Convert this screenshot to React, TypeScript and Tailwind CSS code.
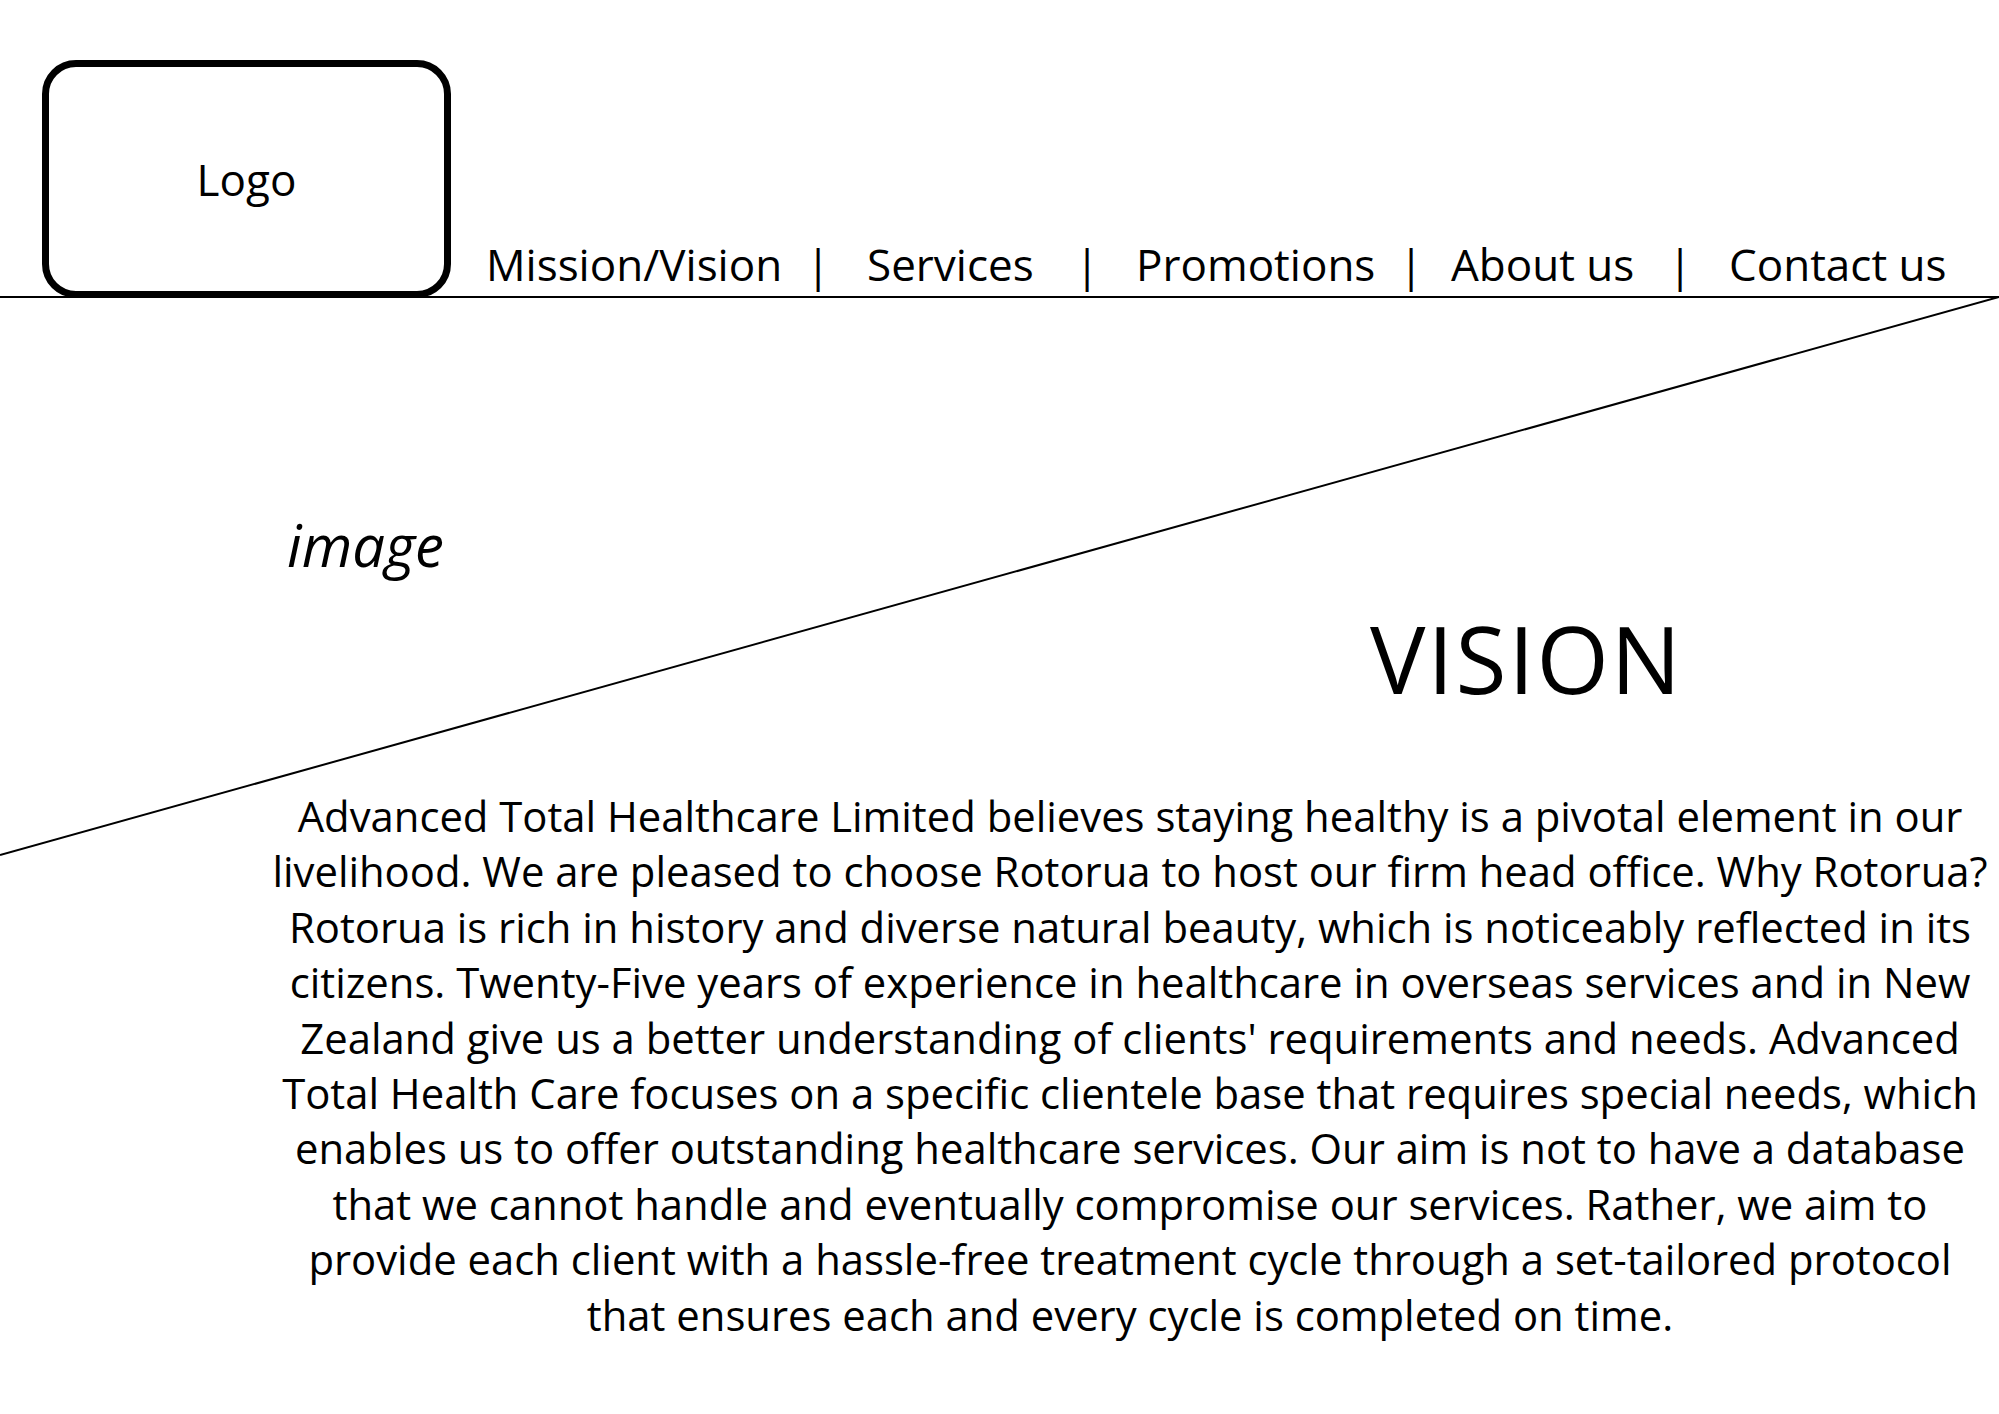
const navItems = [
  { label: "Mission/Vision", box: "w-[320px]" },
  { label: "Services", box: "w-[245px] pl-[37px]" },
  { label: "Promotions", box: "w-[300px] pl-[37px]" },
  { label: "About us", box: "w-[245px] pl-[28px]" },
  { label: "Contact us", box: "pl-[37px]" },
];

export default function App() {
  return (
    <div className="relative w-[1999px] h-[1414px] overflow-hidden bg-white text-black font-['Open_Sans',sans-serif]">
      {/* diagonal stroke of the wireframe */}
      <svg className="absolute inset-0 pointer-events-none" width="1999" height="1414" viewBox="0 0 1999 1414">
        <line x1="1999" y1="297" x2="0" y2="855" stroke="#000" strokeWidth="2" />
      </svg>

      <header className="flex items-end h-[298px] pl-[42px] border-b-2 border-black">
        <div className="flex items-center justify-center w-[409px] h-[238px] -mb-[2px] border-[7px] border-black rounded-[34px]">
          <span className="text-[44px] leading-none">Logo</span>
        </div>
        <nav className="flex items-baseline ml-[35px] mb-[10px] text-[44px] leading-none">
          {navItems.map((item, i) => (
            <div key={item.label} className="flex items-baseline">
              {i > 0 && <span className="w-[24px] text-center">|</span>}
              <span className={item.box}>{item.label}</span>
            </div>
          ))}
        </nav>
      </header>

      <main>
        <p className="ml-[287px] mt-[218px] text-[58px] leading-none italic">image</p>
        <h1 className="ml-[1370px] mt-[38px] text-[93px] leading-none font-normal tracking-[2px]">VISION</h1>
        <p className="ml-[262px] mt-[83px] w-[1736px] text-center text-[41.8px] leading-[55.4px]">
          Advanced Total Healthcare Limited believes staying healthy is a pivotal element in our
          <br />
          livelihood. We are pleased to choose Rotorua to host our firm head office. Why Rotorua?
          <br />
          Rotorua is rich in history and diverse natural beauty, which is noticeably reflected in its
          <br />
          citizens. Twenty-Five years of experience in healthcare in overseas services and in New
          <br />
          Zealand give us a better understanding of clients' requirements and needs. Advanced
          <br />
          Total Health Care focuses on a specific clientele base that requires special needs, which
          <br />
          enables us to offer outstanding healthcare services. Our aim is not to have a database
          <br />
          that we cannot handle and eventually compromise our services. Rather, we aim to
          <br />
          provide each client with a hassle-free treatment cycle through a set-tailored protocol
          <br />
          that ensures each and every cycle is completed on time.
        </p>
      </main>
    </div>
  );
}
